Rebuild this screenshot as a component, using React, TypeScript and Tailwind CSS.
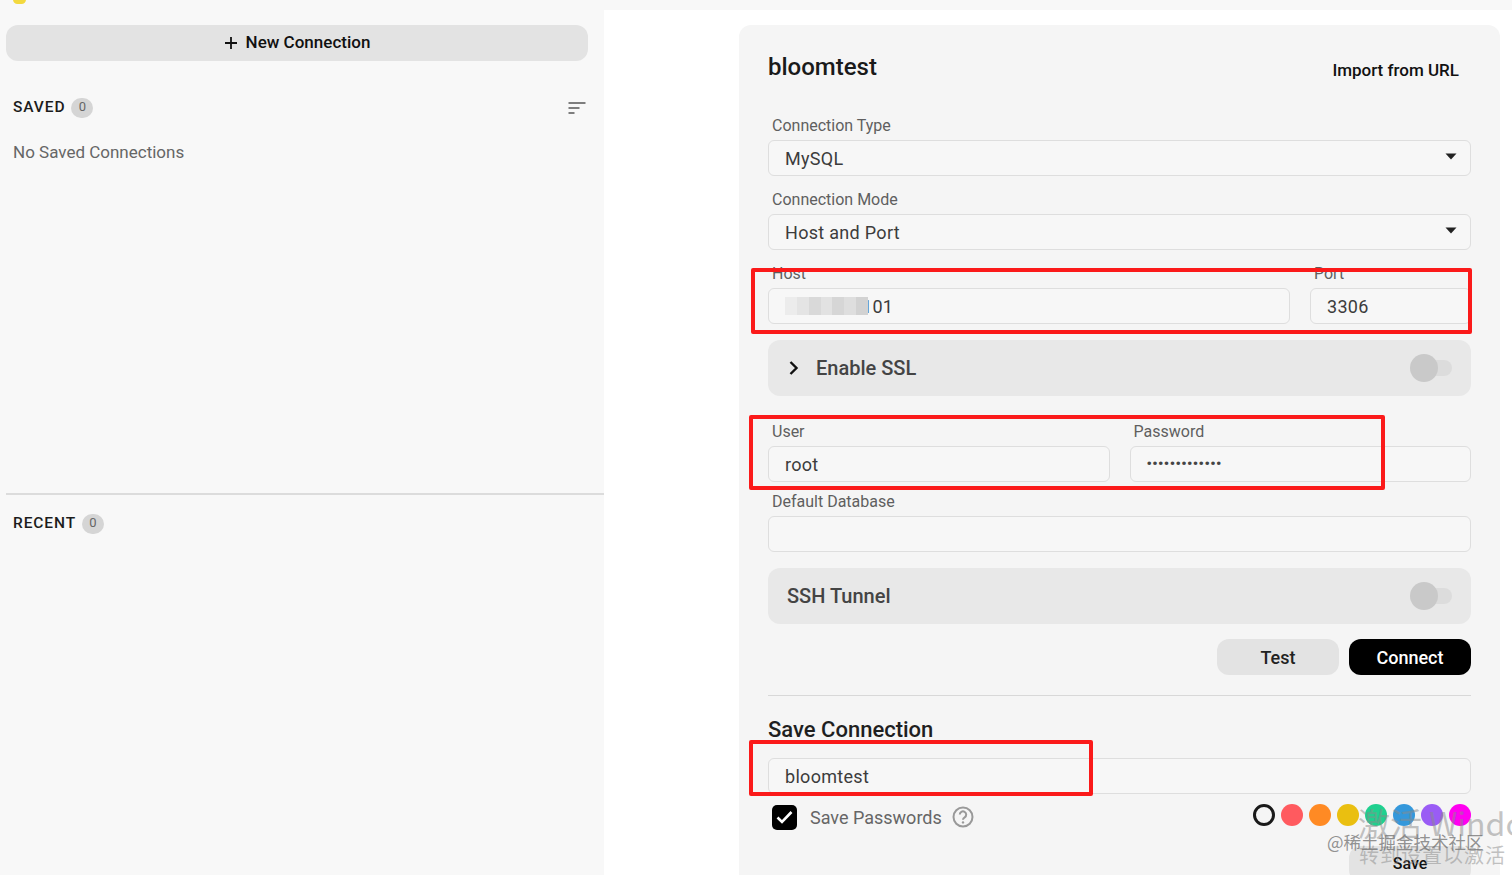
import { ReactNode } from "react";

const swatches = ["#ff5a5f", "#ff8a24", "#eabf10", "#1fd08f", "#3498db", "#9a5cf5", "#ff00f0"];
const mosaic = ["#ececec", "#e4e4e4", "#d9d9d9", "#e2e2e2", "#d6d6d6", "#dedede", "#d2d2d2"];

function Field({ label, children, className = "" }: { label: string; children: ReactNode; className?: string }) {
  return (
    <div className={className}>
      <div className="mb-[3px] flex h-[23px] items-center pl-1 text-[16px] text-[#5f5f5f]">{label}</div>
      {children}
    </div>
  );
}

function Input({ children, select }: { children?: ReactNode; select?: boolean }) {
  return (
    <div className="flex h-[36px] items-center justify-between rounded-md border border-[#dedede] bg-[#f7f7f7] pl-4 pr-[13px] text-[18px] tracking-[0.3px] text-[#3c3c3c]">
      {children}
      {select && (
        <svg width="12" height="7" viewBox="0 0 12 7" className="mb-1">
          <path d="M0.5 0.5h11L6 6.5z" fill="#222" />
        </svg>
      )}
    </div>
  );
}

function Toggle() {
  return (
    <div className="relative h-[16px] w-[36px] rounded-full bg-[#dcdcdc]">
      <div className="absolute -top-[6px] -left-[6px] h-[28px] w-[28px] rounded-full bg-[#c9c9c9]" />
    </div>
  );
}

export default function App() {
  return (
    <div className="relative flex h-[875px] w-[1512px] overflow-hidden bg-[#f8f8f8] font-['Roboto',sans-serif]">
      <div className="absolute -top-[5px] left-[13px] h-[9px] w-[13px] rounded-full bg-[#f3d93f]" />

      {/* Sidebar */}
      <aside className="flex w-[604px] shrink-0 flex-col pt-[25px]">
        <button className="mx-[6px] flex h-[36px] w-[582px] items-center justify-center gap-2 rounded-xl bg-[#e3e3e3] text-[17px] font-medium text-[#111]">
          <svg width="14" height="14" viewBox="0 0 14 14">
            <path d="M7 1v12M1 7h12" stroke="#111" strokeWidth="1.8" />
          </svg>
          New Connection
        </button>
        <div className="mt-[36px] flex h-[22px] items-center justify-between pl-[13px] pr-[18px]">
          <div className="flex items-center gap-[6px]">
            <span className="text-[15.5px] font-medium tracking-[0.9px] text-[#1c1c1c]">SAVED</span>
            <span className="flex h-[20px] w-[22px] items-start justify-center rounded-full bg-[#d5d5d5] text-[13px] leading-[18px] text-[#666]">0</span>
          </div>
          <svg width="18" height="14" viewBox="0 0 18 14">
            <path d="M0.5 2h17M0.5 7h11M0.5 12h6" stroke="#555" strokeWidth="1.4" />
          </svg>
        </div>
        <div className="mt-[22px] h-[23px] pl-[13px] text-[17px] leading-[23px] text-[#666]">No Saved Connections</div>
        <div className="mt-[329px] ml-[6px] h-[2px] bg-[#dcdcdc]" />
        <div className="mt-[18px] flex h-[22px] items-center gap-[6px] pl-[13px]">
          <span className="text-[15.5px] font-medium tracking-[0.9px] text-[#1c1c1c]">RECENT</span>
          <span className="flex h-[20px] w-[22px] items-start justify-center rounded-full bg-[#d5d5d5] text-[13px] leading-[18px] text-[#666]">0</span>
        </div>
      </aside>

      {/* Main */}
      <main className="mt-[10px] flex-1 bg-white pl-[135px] pr-[12px] pt-[15px]">
        <div className="h-[900px] rounded-t-xl bg-[#f5f5f5] px-[29px]">
          <div className="flex h-[89px] items-start justify-between">
            <h1 className="mt-[26px] text-[24px] font-medium leading-[32px] text-[#1a1a1a]">bloomtest</h1>
            <span className="mt-[34px] mr-[12px] text-[17px] font-medium leading-[22px] text-[#111]">Import from URL</span>
          </div>

          <Field label="Connection Type">
            <Input select>MySQL</Input>
          </Field>
          <Field label="Connection Mode" className="mt-[12px]">
            <Input select>Host and Port</Input>
          </Field>

          <div className="mt-[12px] flex gap-[20px]">
            <Field label="Host" className="flex-1">
              <Input>
                <div className="flex items-center">
                  <div className="relative z-10 flex h-[18px] w-[83px]">
                    {mosaic.map((c, i) => (
                      <div key={i} className="flex-1" style={{ backgroundColor: c }} />
                    ))}
                  </div>
                  <span className="-ml-[6px]">101</span>
                </div>
              </Input>
            </Field>
            <Field label="Port" className="w-[161px]">
              <Input>3306</Input>
            </Field>
          </div>

          <div className="mt-[16px] flex h-[56px] items-center justify-between rounded-xl bg-[#e8e8e8] pl-[20px] pr-[19px]">
            <div className="flex items-center gap-[16px]">
              <svg width="12" height="16" viewBox="0 0 12 16">
                <path d="M2.5 2l6 6-6 6" fill="none" stroke="#111" strokeWidth="2.4" />
              </svg>
              <span className="text-[20px] font-medium text-[#444]">Enable SSL</span>
            </div>
            <Toggle />
          </div>

          <div className="mt-[24px] flex gap-[20px]">
            <Field label="User" className="flex-1">
              <Input>root</Input>
            </Field>
            <Field label="Password" className="flex-1">
              <Input>
                <span className="text-[15px] font-bold tracking-[0.4px] text-[#444]">•••••••••••••</span>
              </Input>
            </Field>
          </div>

          <Field label="Default Database" className="mt-[8px]">
            <Input />
          </Field>

          <div className="mt-[16px] flex h-[56px] items-center justify-between rounded-xl bg-[#e8e8e8] pl-[19px] pr-[19px]">
            <span className="text-[20px] font-medium text-[#444]">SSH Tunnel</span>
            <Toggle />
          </div>

          <div className="mt-[15px] flex justify-end gap-[10px]">
            <button className="h-[36px] w-[122px] rounded-xl bg-[#e3e3e3] text-[18px] font-medium text-[#222]">Test</button>
            <button className="h-[36px] w-[122px] rounded-xl bg-black text-[18px] font-medium text-white">Connect</button>
          </div>

          <div className="mt-[20px] h-px bg-[#d8d8d8]" />

          <h2 className="mt-[20px] h-[28px] text-[22px] font-medium leading-[28px] text-[#1f1f1f]">Save Connection</h2>
          <div className="mt-[14px]">
            <Input>bloomtest</Input>
          </div>

          <div className="mt-[9px] flex h-[28px] items-center justify-between">
            <div className="flex items-center pl-1">
              <div className="flex h-[25px] w-[25px] items-center justify-center rounded-[5px] bg-black">
                <svg width="17" height="14" viewBox="0 0 17 14">
                  <path d="M1.5 7.5l4.5 4.5L15.5 2" fill="none" stroke="#fff" strokeWidth="2.6" />
                </svg>
              </div>
              <span className="ml-[13px] text-[18px] text-[#666]">Save Passwords</span>
              <svg width="22" height="22" viewBox="0 0 22 22" className="ml-[10px]">
                <circle cx="11" cy="11" r="9.5" fill="none" stroke="#999" strokeWidth="2" />
                <path d="M7.8 8.6a3.2 3.2 0 1 1 4.9 2.7c-1.1.7-1.7 1.2-1.7 2.5" fill="none" stroke="#999" strokeWidth="2" />
                <circle cx="11" cy="16.4" r="1.2" fill="#999" />
              </svg>
            </div>
            <div className="mb-[4px] flex items-center gap-[6px]">
              <div className="h-[22px] w-[22px] rounded-full border-[3px] border-[#1a1a1a]" />
              {swatches.map((c) => (
                <div key={c} className="h-[22px] w-[22px] rounded-full" style={{ backgroundColor: c }} />
              ))}
            </div>
          </div>

          <div className="mt-[15px] flex justify-end">
            <button className="h-[36px] w-[122px] rounded-xl bg-[#e3e3e3] text-[16px] font-medium text-[#111]">Save</button>
          </div>
        </div>
      </main>

      {/* Annotation boxes drawn over the screenshot */}
      <div className="absolute top-[268px] left-[751px] h-[66px] w-[721px] rounded-[2px] border-[4px] border-[#fb1a1a]" />
      <div className="absolute top-[415px] left-[749px] h-[75px] w-[636px] rounded-[2px] border-[4px] border-[#fb1a1a]" />
      <div className="absolute top-[740px] left-[749px] h-[56px] w-[344px] rounded-[2px] border-[4px] border-[#fb1a1a]" />

      {/* Watermarks */}
      <div className="absolute top-[798px] left-[1358px] whitespace-nowrap font-['Noto_Sans_CJK_SC',sans-serif] text-[32px] leading-[48px] text-[#8a8a8a]/50">激活 Windo</div>
      <div className="absolute top-[840px] left-[1359px] whitespace-nowrap font-['Noto_Sans_CJK_SC',sans-serif] text-[20px] leading-[30px] tracking-[1px] text-[#8a8a8a]/50">转到设置以激活</div>
      <div className="absolute top-[829px] left-[1327px] whitespace-nowrap font-['Noto_Sans_CJK_SC',sans-serif] text-[17.5px] leading-[26px] text-[#777]/80">@稀土掘金技术社区</div>
    </div>
  );
}
